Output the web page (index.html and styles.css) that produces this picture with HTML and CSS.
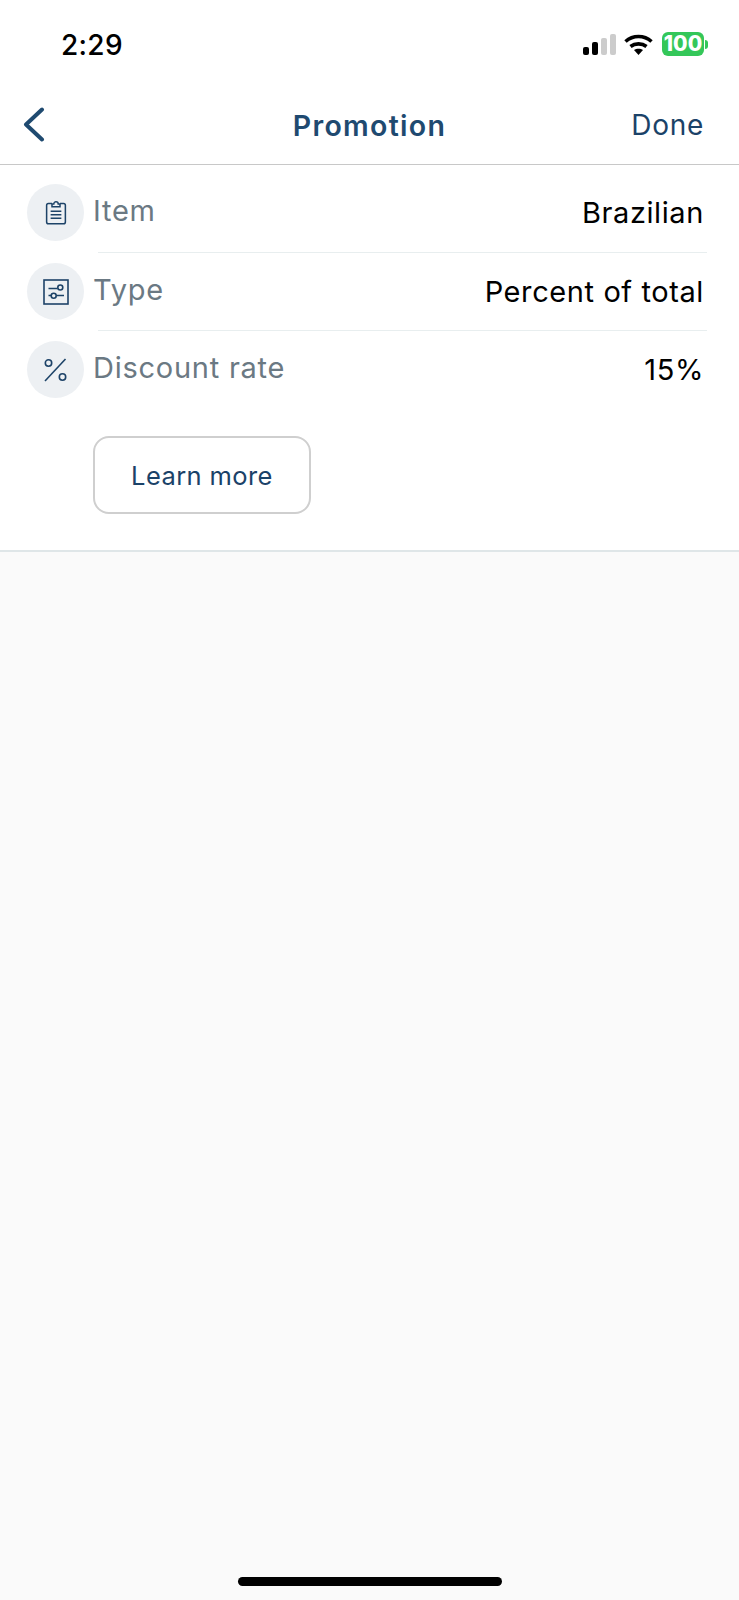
FILE: index.html
```html
<!DOCTYPE html>
<html lang="en">
<head>
  <meta charset="UTF-8">
  <title>Promotion</title>
  <link rel="stylesheet" href="styles.css">
</head>
<body>

<div class="statusbar">
  <span class="clock">2:29</span>
  <div class="status-icons">
    <svg class="signal" width="33" height="21" viewBox="0 0 33 21">
      <rect x="0" y="13" width="6" height="8" rx="2" fill="#000"/>
      <rect x="9" y="8" width="6" height="13" rx="2" fill="#000"/>
      <rect x="18" y="4" width="6" height="17" rx="2" fill="#ccc"/>
      <rect x="27" y="0" width="6" height="21" rx="2" fill="#ccc"/>
    </svg>
    <svg class="wifi" width="29" height="21" viewBox="0 0 29 21">
      <path d="M1.500 7.500C9 0.800 20 0.800 27.500 7.500" fill="none" stroke="#000" stroke-width="3.600"/>
      <path d="M6.500 12.500C11 9 18 9 22.500 12.500" fill="none" stroke="#000" stroke-width="3.600"/>
      <path d="M10 16C12.500 14.300 16.500 14.300 19 16L14.500 21Z" fill="#000"/>
    </svg>
    <div class="battery">
      <span class="battery-level">100</span>
      <span class="battery-tip"></span>
    </div>
  </div>
</div>

<div class="navbar">
  <svg class="back" width="24" height="36" viewBox="0 0 24 36">
    <path d="M19 2.500L3 17.500L19 32.500" fill="none" stroke="#1f4a70" stroke-width="4" stroke-linecap="round" stroke-linejoin="round"/>
  </svg>
  <h1 class="title">Promotion</h1>
  <span class="done">Done</span>
</div>

<div class="panel">
  <div class="row">
    <div class="circle">
      <svg width="22" height="25" viewBox="0 0 24 28" fill="none" stroke="#1d4368" stroke-width="1.700">
        <path d="M7.500 4H3.500A2 2 0 0 0 1.500 6V24.500A2 2 0 0 0 3.500 26.500H20.500A2 2 0 0 0 22.500 24.500V6A2 2 0 0 0 20.500 4H16.500"/>
        <path d="M7.500 7.500V4.500H9.500A2.500 2.500 0 0 1 14.500 4.500H16.500V7.500Z"/>
        <path d="M6 12.500H18M6 16.500H18M6 20.500H18"/>
      </svg>
    </div>
    <span class="label">Item</span>
    <span class="value">Brazilian</span>
  </div>
  <div class="sep"></div>

  <div class="row">
    <div class="circle">
      <svg width="26" height="26" viewBox="0 0 26 26" fill="none" stroke="#1d4368" stroke-width="1.600">
        <rect x="1" y="1" width="24" height="24"/>
        <path d="M5.500 9.500H14.500M5.500 16.500H8M13.500 16.500H21"/>
        <circle cx="17.300" cy="8.500" r="2.500"/>
        <circle cx="10.700" cy="16.700" r="2.500"/>
      </svg>
    </div>
    <span class="label">Type</span>
    <span class="value">Percent of total</span>
  </div>
  <div class="sep"></div>

  <div class="row">
    <div class="circle">
      <svg width="23" height="24" viewBox="0 0 23 24" fill="none" stroke="#1d4368" stroke-width="1.600">
        <path d="M21.500 1L1 23"/>
        <circle cx="4.500" cy="5" r="3.200"/>
        <circle cx="18.500" cy="19" r="3.200"/>
      </svg>
    </div>
    <span class="label">Discount rate</span>
    <span class="value">15%</span>
  </div>

  <button class="learn">Learn more</button>
</div>

<div class="homebar"></div>

</body>
</html>
```

FILE: styles.css
```css
* {
  box-sizing: border-box;
}
html, body {
  height: 100%;
}
body {
  margin: 0;
  background: #fafafa;
  font-family: 'Inter', 'Liberation Sans', sans-serif;
  display: flex;
  flex-direction: column;
}

.statusbar {
  height: 88px;
  background: #fff;
  padding: 31px 31px 0 61px;
  display: flex;
  justify-content: space-between;
  align-items: flex-start;
}
.clock {
  font-size: 28px;
  line-height: 28px;
  font-weight: 500;
  letter-spacing: 0.3px;
  color: #000;
}
.status-icons {
  display: flex;
  align-items: center;
  gap: 8px;
  margin-top: 1px;
}
.battery {
  display: flex;
  align-items: center;
  gap: 1px;
  margin-left: 1px;
}
.battery-level {
  width: 42px;
  height: 24px;
  background: #34c759;
  border-radius: 6px;
  color: #fff;
  font-size: 21px;
  line-height: 24px;
  font-weight: 800;
  text-align: center;
}
.battery-tip {
  width: 3px;
  height: 9px;
  background: #34c759;
  border-radius: 0 3px 3px 0;
}

.navbar {
  height: 77px;
  background: #fff;
  border-bottom: 1px solid #c8c8c8;
  padding: 0 35px 2px;
  display: grid;
  grid-template-columns: 1fr auto 1fr;
  align-items: center;
}
.back {
  margin-left: -12px;
}
.title {
  margin: 0;
  font-size: 28.500px;
  font-weight: 600;
  color: #1f4a70;
  letter-spacing: 1.300px;
}
.done {
  justify-self: end;
  font-size: 28px;
  color: #1b4268;
  letter-spacing: 0.700px;
}

.panel {
  background: #fff;
  border-bottom: 2px solid #dfe6e8;
  padding: 10px 0 36px;
}
.row {
  height: 77px;
  padding: 0 35px 0 27px;
  display: flex;
  align-items: center;
}
.row:first-child {
  padding-bottom: 2px;
}
.circle {
  width: 57px;
  height: 57px;
  border-radius: 50%;
  background: #edf0f3;
  display: flex;
  align-items: center;
  justify-content: center;
  flex-shrink: 0;
}
.label {
  margin-left: 9px;
  font-size: 29px;
  color: #6b7983;
  letter-spacing: 0.750px;
  margin-top: -4px;
}
.value {
  margin-left: auto;
  font-size: 29px;
  color: #000;
  letter-spacing: 0.600px;
}
.sep {
  height: 1px;
  background: #e8eeef;
  margin: 0 32px 0 98px;
}

.learn {
  display: block;
  margin: 28px 0 0 93px;
  width: 218px;
  height: 78px;
  background: #fff;
  border: 2px solid #cfcfcf;
  border-radius: 16px;
  font-family: inherit;
  font-size: 25.500px;
  color: #1b4268;
  letter-spacing: 0.400px;
}

.homebar {
  width: 264px;
  height: 9px;
  margin: auto auto 14px;
  background: #000;
  border-radius: 5px;
}
```
